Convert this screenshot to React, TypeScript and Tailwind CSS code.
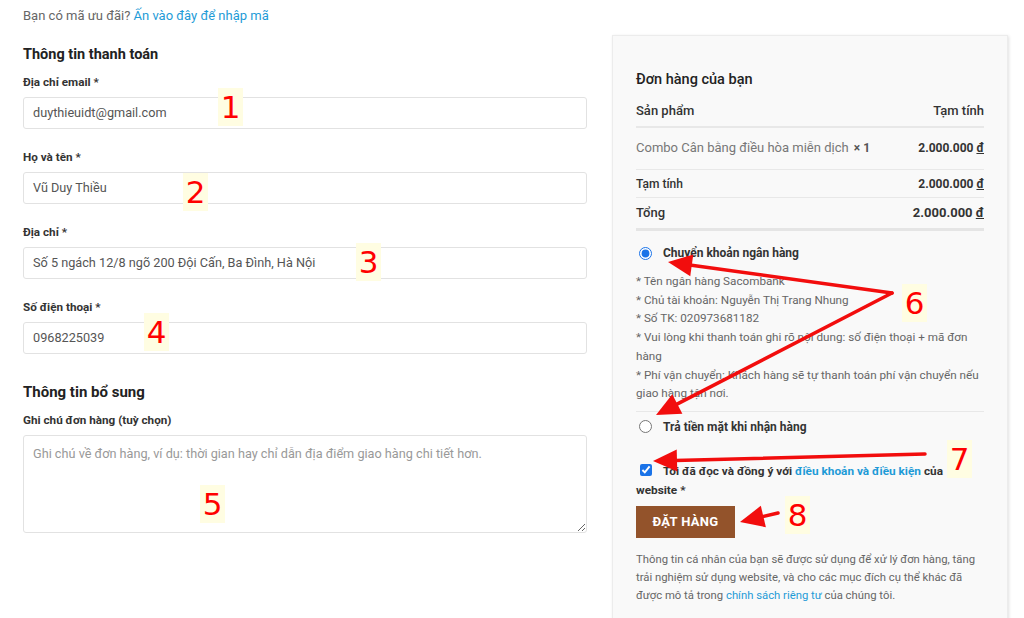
import React from "react";

const Field = ({ label, value }: { label: string; value: string }) => (
  <div className="mb-[19px]">
    <div className="h-[18px] text-[11.7px] font-bold leading-[18px] text-[#333] mb-[6px]">{label}</div>
    <div className="h-[32px] w-full rounded-[3px] border border-[#e2e2e2] bg-white px-[9px] text-[12.7px] leading-[30px] text-[#555]">
      {value}
    </div>
  </div>
);

const Money = ({ v, cls }: { v: string; cls: string }) => (
  <span className={cls}>
    {v} <span className="underline">đ</span>
  </span>
);

const Arrow = ({ x1, y1, x2, y2 }: { x1: number; y1: number; x2: number; y2: number }) => {
  const dx = x2 - x1;
  const dy = y2 - y1;
  const len = Math.sqrt(dx * dx + dy * dy);
  const ux = dx / len;
  const uy = dy / len;
  const hl = 24;
  const hw = 11;
  const bx = x2 - ux * hl;
  const by = y2 - uy * hl;
  const pts = `${x2},${y2} ${bx - uy * hw},${by + ux * hw} ${bx + uy * hw},${by - ux * hw}`;
  return (
    <g>
      <line x1={x1} y1={y1} x2={bx + ux * 2} y2={by + uy * 2} stroke="#f20d0d" strokeWidth={3.5} strokeLinecap="round" />
      <polygon points={pts} fill="#f20d0d" />
    </g>
  );
};

const marks = [
  { n: "1", cls: "left-[218px] top-[88px]" },
  { n: "2", cls: "left-[183px] top-[173px]" },
  { n: "3", cls: "left-[356px] top-[243px]" },
  { n: "4", cls: "left-[144px] top-[313px]" },
  { n: "5", cls: "left-[200px] top-[485px]" },
  { n: "6", cls: "left-[902px] top-[284px]" },
  { n: "7", cls: "left-[947px] top-[440px]" },
  { n: "8", cls: "left-[785px] top-[496px]" },
];

const App = () => {
  return (
    <div className="relative h-[618px] w-[1024px] overflow-hidden bg-white font-['Roboto',sans-serif]">
      <div className="flex gap-[25px] pl-[23px]">
        {/* cot trai: thong tin thanh toan */}
        <div className="w-[564px] pt-[6px]">
          <div className="text-[13px] leading-[20px] text-[#666]">
            Bạn có mã ưu đãi? <span className="text-[#1e9bd7]">Ấn vào đây để nhập mã</span>
          </div>
          <h3 className="mt-[19px] mb-[8px] text-[14.5px] font-bold leading-[20px] text-[#222]">Thông tin thanh toán</h3>
          <Field label="Địa chỉ email *" value="duythieuidt@gmail.com" />
          <Field label="Họ và tên *" value="Vũ Duy Thiều" />
          <Field label="Địa chỉ *" value="Số 5 ngách 12/8 ngõ 200 Đội Cấn, Ba Đình, Hà Nội" />
          <Field label="Số điện thoại *" value="0968225039" />
          <h3 className="mt-[28px] mb-[9px] text-[15px] font-bold leading-[20px] text-[#222]">Thông tin bổ sung</h3>
          <div className="h-[18px] text-[11.7px] font-bold leading-[18px] text-[#333] mb-[6px]">Ghi chú đơn hàng (tuỳ chọn)</div>
          <textarea
            className="block h-[98px] w-full resize-y rounded-[3px] border border-[#e2e2e2] bg-white px-[9px] py-[8px] text-[12.7px] leading-[20px] text-[#555] placeholder:text-[#999] outline-none"
            placeholder="Ghi chú về đơn hàng, ví dụ: thời gian hay chỉ dẫn địa điểm giao hàng chi tiết hơn."
          />
        </div>

        {/* cot phai: don hang */}
        <div className="mt-[35px] h-[620px] w-[396px] border border-[#ececec] bg-[#f9f9f9] px-[23px] pt-[34px] shadow-[1px_1px_3px_rgba(0,0,0,0.12)]">
          <h3 className="text-[14.5px] font-medium leading-[20px] text-[#222]">Đơn hàng của bạn</h3>
          <div className="mt-[11px] flex justify-between border-b-2 border-[#e8e8e8] pb-[5px] text-[13px] font-medium leading-[20px] text-[#333]">
            <span>Sản phẩm</span>
            <span>Tạm tính</span>
          </div>
          <div className="flex items-center justify-between border-b border-[#e8e8e8] pt-[10px] pb-[11px] leading-[20px]">
            <span className="text-[13px] text-[#777]">
              Combo Cân bằng điều hòa miễn dịch <span className="ml-[2px] text-[12px] font-bold text-[#555]">× 1</span>
            </span>
            <Money v="2.000.000" cls="text-[12px] font-bold text-[#333]" />
          </div>
          <div className="flex items-center justify-between border-b border-[#e8e8e8] pt-[5px] pb-[4px] leading-[18px]">
            <span className="text-[12px] font-medium text-[#333]">Tạm tính</span>
            <Money v="2.000.000" cls="text-[12px] font-bold text-[#333]" />
          </div>
          <div className="flex items-center justify-between border-b-[3px] border-[#e5e5e5] pt-[5px] pb-[5px] leading-[20px]">
            <span className="text-[13px] font-medium text-[#333]">Tổng</span>
            <Money v="2.000.000" cls="text-[13px] font-bold text-[#333]" />
          </div>

          <label className="mt-[13px] flex items-center text-[12px] font-bold leading-[18px] text-[#333]">
            <input type="radio" name="pay" defaultChecked className="ml-[3px] mr-[11px] h-[13px] w-[13px] accent-[#1a73e8]" />
            Chuyển khoản ngân hàng
          </label>
          <div className="mt-[10px] border-b border-[#e8e8e8] pb-[8px] text-[11.7px] leading-[18.7px] text-[#666]">
            <p>* Tên ngân hàng Sacombank</p>
            <p>* Chủ tài khoản: Nguyễn Thị Trang Nhung</p>
            <p>* Số TK: 020973681182</p>
            <p>* Vui lòng khi thanh toán ghi rõ nội dung: số điện thoại + mã đơn hàng</p>
            <p>* Phí vận chuyển: Khách hàng sẽ tự thanh toán phí vận chuyển nếu giao hàng tận nơi.</p>
          </div>
          <label className="mt-[6px] flex items-center text-[12px] font-bold leading-[18px] text-[#333]">
            <input type="radio" name="pay" className="ml-[3px] mr-[11px] h-[13px] w-[13px]" />
            Trả tiền mặt khi nhận hàng
          </label>

          <div className="mt-[26px] text-[11.8px] font-bold leading-[19px] text-[#333]">
            <input type="checkbox" defaultChecked className="mr-[11px] ml-[4px] h-[12px] w-[12px] align-[-1px] accent-[#1a73e8]" />
            Tôi đã đọc và đồng ý với <span className="text-[#1e9bd7]">điều khoản và điều kiện</span> của website *
          </div>
          <button className="mt-[6px] h-[32px] w-[99px] bg-[#93532b] text-[13px] font-bold tracking-[0.3px] text-white">
            ĐẶT HÀNG
          </button>
          <p className="mt-[13px] text-[11.3px] leading-[18px] text-[#666]">
            Thông tin cá nhân của bạn sẽ được sử dụng để xử lý đơn hàng, tăng trải nghiệm sử dụng website, và cho các mục đích cụ thể khác đã được mô tả trong{" "}
            <span className="text-[#1e9bd7]">chính sách riêng tư</span> của chúng tôi.
          </p>
        </div>
      </div>

      {/* chu thich do */}
      {marks.map((m) => (
        <div
          key={m.n}
          className={`absolute ${m.cls} flex h-[38px] w-[25px] items-center justify-center bg-[#fffde2] font-['DejaVu_Sans',sans-serif] text-[31px] leading-none text-[#f00]`}
        >
          {m.n}
        </div>
      ))}
      <svg className="pointer-events-none absolute left-0 top-0" width={1024} height={618}>
        <Arrow x1={892} y1={293} x2={668} y2={262} />
        <Arrow x1={892} y1={293} x2={656} y2={415} />
        <Arrow x1={925} y1={454} x2={653} y2={461} />
        <Arrow x1={778} y1={513} x2={740} y2={522} />
      </svg>
    </div>
  );
};

export default App;
